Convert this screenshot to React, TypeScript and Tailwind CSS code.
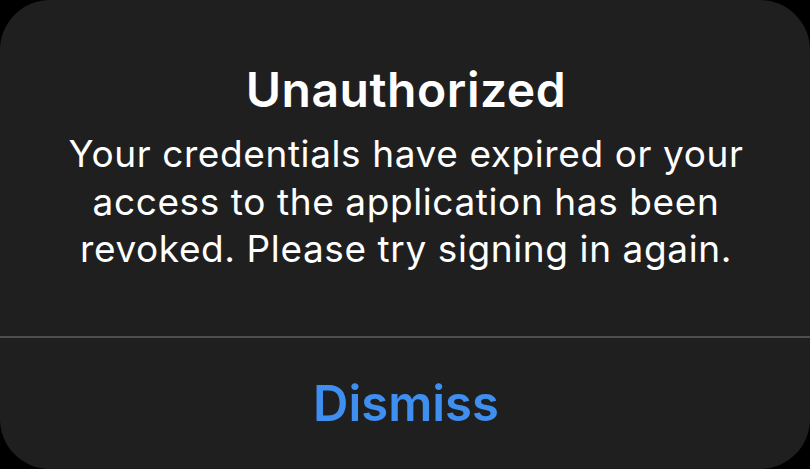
import React from "react";

export default function App() {
  return (
    <div className="w-[810px] h-[469px] bg-black">
      <div
        className="w-full h-full bg-[#1f1f1f] rounded-[50px] flex flex-col overflow-hidden"
        style={{ fontFamily: "Inter, 'Noto Sans', sans-serif" }}
      >
        <div className="h-[336px] flex flex-col items-center pt-[62px] pl-[2px]">
          <div className="text-white text-[48px] font-semibold leading-[56px] tracking-[0.55px]">
            Unauthorized
          </div>
          <div className="mt-[12px] text-white text-[37px] leading-[47.5px] text-center tracking-[0.6px]">
            <div>Your credentials have expired or your</div>
            <div>access to the application has been</div>
            <div>revoked. Please try signing in again.</div>
          </div>
        </div>
        <div className="h-[2px] bg-[#4e4e4e]" />
        <div className="flex-1 flex items-center justify-center pl-[2px]">
          <div className="text-[#3f8ff0] text-[49px] font-semibold">Dismiss</div>
        </div>
      </div>
    </div>
  );
}
